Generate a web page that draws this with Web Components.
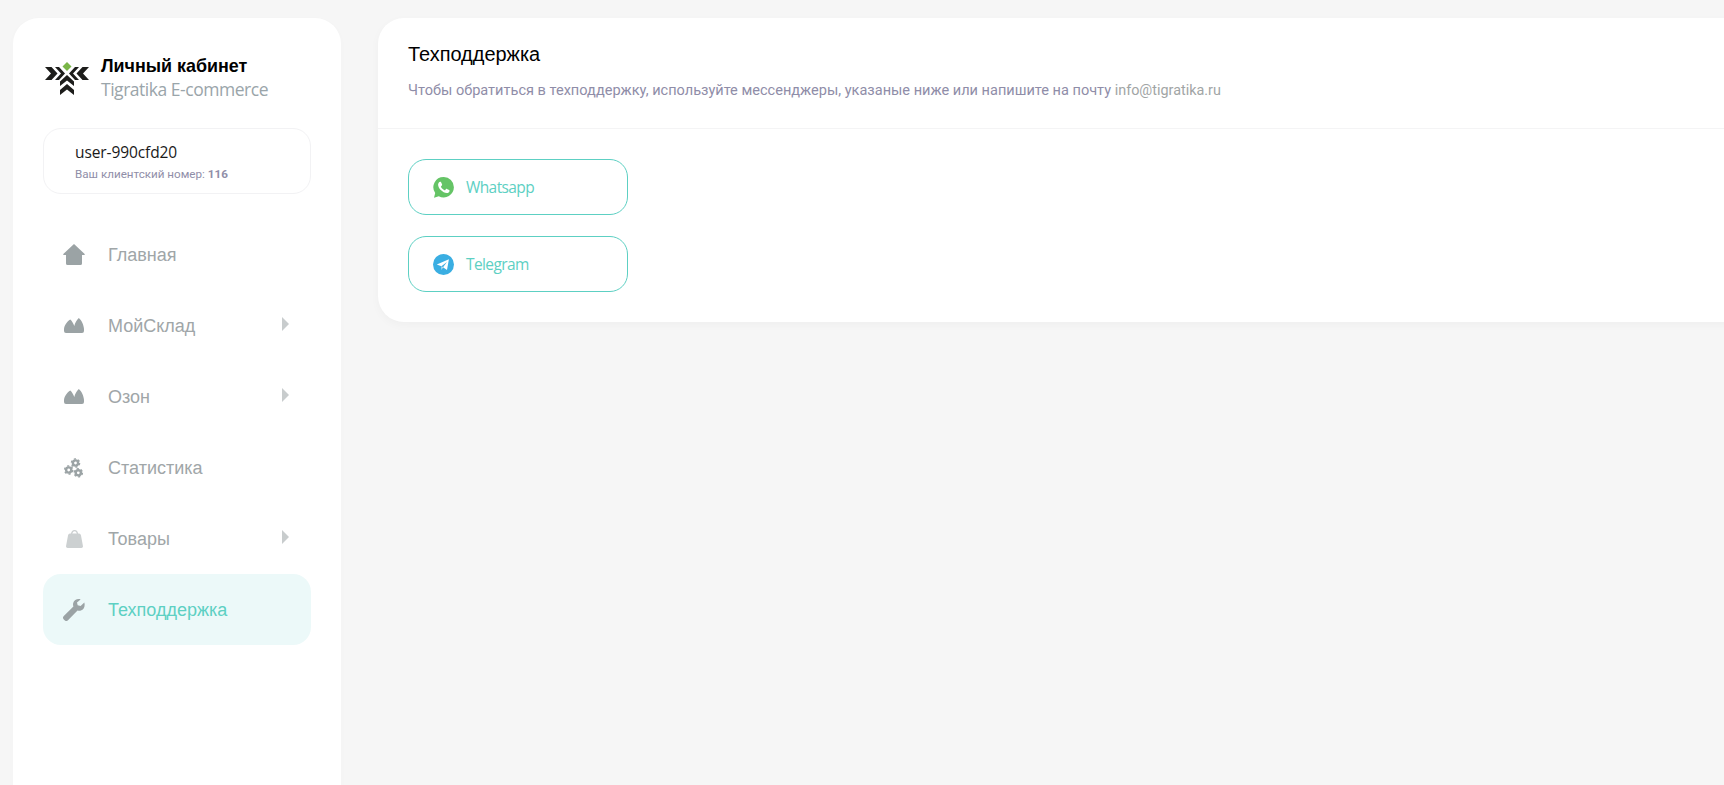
<!DOCTYPE html>
<html lang="ru"><head><meta charset="utf-8"><title>Техподдержка</title>
<style>
html,body{margin:0;height:100%;overflow:hidden;background:#f6f6f6}
body{font-family:"Liberation Sans",Arial,sans-serif}
</style></head><body>
<app-shell>
  <side-bar slot="side">
    <brand-logo></brand-logo>
    <user-card name="user-990cfd20" num="116"></user-card>
    <nav-item label="Главная" icon="home"></nav-item>
    <nav-item label="МойСклад" icon="crown" arrow></nav-item>
    <nav-item label="Озон" icon="crown" arrow></nav-item>
    <nav-item label="Статистика" icon="gears"></nav-item>
    <nav-item label="Товары" icon="bag" arrow></nav-item>
    <nav-item label="Техподдержка" icon="wrench" active></nav-item>
  </side-bar>
  <support-card>
    <link-button label="Whatsapp" icon="wa"></link-button>
    <link-button label="Telegram" icon="tg"></link-button>
  </support-card>
</app-shell>
<script>
function def(name,html){
  customElements.define(name,class extends HTMLElement{
    connectedCallback(){
      if(this.shadowRoot)return;
      const r=this.attachShadow({mode:'open'});
      r.innerHTML=typeof html==='function'?html(this):html;
    }
  });
}
const gear=(x,y)=>`<circle cx="${x}" cy="${y}" r="2.6" fill="none" stroke="#9ba3a5" stroke-width="2.4"/><circle cx="${x}" cy="${y}" r="4.1" fill="none" stroke="#9ba3a5" stroke-width="1.4" stroke-dasharray="2.15 2.15"/>`;
const ICONS={
 home:'<svg width="22" height="21" viewBox="0 0 22 21"><path fill="#9ba3a5" d="M11 0 21.700 10a.6.6 0 0 1-.4 1H19V19.400A1.600 1.600 0 0 1 17.400 21H4.600A1.600 1.600 0 0 1 3 19.400V11H.7a.6.6 0 0 1-.4-1Z"/></svg>',
 crown:'<svg width="20" height="15" viewBox="0 0 20 15"><path fill="#9ba3a5" d="M0 13V11C.3 7.500 3 3.500 6.300 1.500 8 3 9.500 5.500 10.300 8 11 5 12.500 2 14.800 0 17.500 2 19.800 7 20 11V13A2 2 0 0 1 18 15H2A2 2 0 0 1 0 13Z"/></svg>',
 gears:'<svg width="20" height="20" viewBox="0 0 20 20">'+gear(11.5,5)+gear(4.7,12)+gear(14.300,14.800)+'</svg>',
 bag:'<svg width="17" height="18" viewBox="0 0 17 18"><path fill="none" stroke="#ccd0d1" stroke-width="1.300" d="M5.500 5C5.500 2 7 .7 8.500 .7 10 .7 11.500 2 11.500 5"/><path fill="#ccd0d1" d="M4 3.500H13C14.200 3.500 14.800 4.500 15 5.500L16.900 15.800A1.800 1.800 0 0 1 15.100 18H1.900A1.800 1.800 0 0 1 .1 15.800L2 5.500C2.200 4.500 2.800 3.500 4 3.500Z"/></svg>',
 wrench:'<svg width="22" height="22" viewBox="0 0 22 22"><path fill="#9ba3a5" d="M21.300 3.400 17.600 7 14.700 6.200 14 3.400 17.600.4C14.600-.6 11 1 10.200 4.100c-.3 1.200-.2 2.300.2 3.300L.8 17a2.400 2.400 0 0 0 0 3.400l.8.800a2.400 2.400 0 0 0 3.400 0l9.500-9.700c1.100.4 2.300.5 3.400.1 3-.9 4.500-4.800 3.400-8.200Z"/></svg>',
 wa:'<svg width="21" height="21" viewBox="0 0 21 21"><path fill="#65c466" d="M10.600 0A10.200 10.200 0 0 1 20.900 10.300 10.300 10.300 0 0 1 5.800 19.300L1 20.800 2.200 16A10.200 10.200 0 0 1 10.600 0Z"/><path fill="#fff" d="M7.200 4.800c.4 0 .7 0 .9.500l1 2.300c.1.400 0 .7-.3 1l-.8.900c-.1.200-.1.400 0 .6.800 1.400 1.900 2.500 3.500 3.200.3.100.5.100.6-.1l.9-1.100c.3-.3.500-.3.900-.2l2.200 1.100c.4.200.5.400.4.900-.2 1.400-1.500 2.200-2.800 2.100C9.700 15.600 5.600 12 5.100 8c-.1-1.300.7-3.100 2.100-3.200Z"/></svg>',
 tg:'<svg width="21" height="21" viewBox="0 0 21 21"><circle cx="10.500" cy="10.500" r="10.500" fill="#3aaee2"/><path fill="#fff" d="M3.800 10.400 15.900 5.300l-1.900 10.700-4-2.800 4-5.100-5.600 4.100Z"/><path fill="#dbe9f2" d="M8.400 12.200 10 13.200 8.500 15.900Z"/></svg>'
};
def('app-shell',`<style>:host{display:flex;gap:37px;padding:18px 0 0 13px;height:785px;box-sizing:border-box;overflow:hidden;align-items:flex-start;width:1724px}</style><slot name="side"></slot><slot></slot>`);
def('side-bar',`<style>:host{display:block;flex:none;width:328px;height:860px;box-sizing:border-box;background:#fff;border-radius:26px;padding:38px 30px;box-shadow:0 2px 10px rgba(0,0,0,.015)}</style><slot></slot>`);
def('brand-logo',`<style>:host{display:flex;gap:12px;align-items:flex-start;padding:0 0 0 2px;height:72px;box-sizing:border-box}
svg{flex:none;margin-top:6px}
.t{font:700 17.900px/24px "Liberation Sans",sans-serif;color:#000}
.s{font:400 17.500px/23px "Open Sans","Liberation Sans",sans-serif;color:#9aa5aa;letter-spacing:-.47px;white-space:nowrap}
.w{margin-top:-2px}</style>
<svg width="44" height="33" viewBox="0 0 44 33" fill="#1d1d1b">
<path fill="#7ab648" d="M22 0 26.500 4.500 22 9 17.500 4.500Z"/>
<path d="M0 5H6.500L12.500 11.500 6.500 18H0L6 11.500Z"/><path d="M10 5H14L20 11.500 14 18H10L16 11.500Z"/>
<path d="M44 5H37.500L31.500 11.500 37.500 18H44L38 11.500Z"/><path d="M34 5H30L24 11.500 30 18H34L28 11.500Z"/>
<path d="M22 13 29 19.500V24L22 18.500 15 24V19.500Z"/><path d="M22 22 29 28V33L22 27.500 15 33V28Z"/></svg>
<div class="w"><div class="t">Личный кабинет</div><div class="s">Tigratika E-commerce</div></div>`);
def('user-card',e=>`<style>:host{display:block;box-sizing:border-box;height:66px;border:1px solid #f2f2f4;border-radius:18px;padding:13px 31px;margin-bottom:25px}
.n{font:400 15.500px/20px "Open Sans",sans-serif;color:#1a1a1a;letter-spacing:-.1px}
.c{font:400 11.650px/16px Roboto,sans-serif;color:#908ea8;margin-top:4px}b{font-weight:700}</style>
<div class="n">${e.getAttribute('name')}</div><div class="c">Ваш клиентский номер: <b>${e.getAttribute('num')}</b></div>`);
def('nav-item',e=>{const a=e.hasAttribute('active');return `<style>:host{display:flex;align-items:center;height:71px;border-radius:18px;padding:0 0 0 20px;box-sizing:border-box;position:relative;${a?'background:#ecf9f9;':''}}
.i{width:22px;height:24px;display:flex;align-items:center;justify-content:center;flex:none}
.l{margin-left:23px;font:400 18px/24px "Liberation Sans",sans-serif;color:${a?'#5dd0c3':'#a0a6a8'}}
.a{position:absolute;left:239px;top:27px;width:0;height:0;border-left:7.500px solid #c8cccd;border-top:7px solid transparent;border-bottom:7px solid transparent}</style>
<span class="i">${ICONS[e.getAttribute('icon')]}</span><span class="l">${e.getAttribute('label')}</span>${e.hasAttribute('arrow')?'<span class="a"></span>':''}`});
def('support-card',`<style>:host{display:block;flex:none;width:1400px;box-sizing:border-box;background:#fff;border-radius:26px 0 0 26px;box-shadow:0 3px 10px rgba(0,0,0,.03)}
header{height:111px;box-sizing:border-box;padding:23px 30px 0;border-bottom:1px solid #f4f4f5}
h1{margin:0;font:400 19.950px/26px "Liberation Sans",sans-serif;color:#000}
p{margin:13px 0 0;font:400 14.550px/22px Roboto,sans-serif;color:#8f8da8}
a{color:#a1a5a5;text-decoration:none;font-size:14.400px}
.b{display:flex;flex-direction:column;gap:21px;padding:30px}</style>
<header><h1>Техподдержка</h1><p>Чтобы обратиться в техподдержку, используйте мессенджеры, указаные ниже или напишите на почту <a href="#">info@tigratika.ru</a></p></header>
<div class="b"><slot></slot></div>`);
def('link-button',e=>`<style>:host{display:flex;align-items:center;width:220px;height:56px;box-sizing:border-box;border:1px solid #5dd0c3;border-radius:18px;padding-left:24px;gap:12px}
svg{display:block;flex:none}span{font:400 15.500px/20px "Open Sans",sans-serif;color:#5dd0c3;letter-spacing:-.6px}</style>
${ICONS[e.getAttribute('icon')]}<span>${e.getAttribute('label')}</span>`);
</script>
</body></html>
